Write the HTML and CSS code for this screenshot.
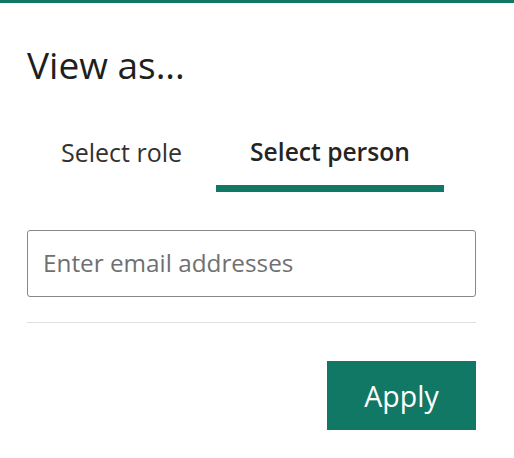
FILE: index.html
```html
<!DOCTYPE html>
<html>
<head>
<meta charset="utf-8">
<link rel="stylesheet" href="styles.css">
</head>
<body>
<div class="topbar"></div>
<div class="panel">
  <h1 class="title">View as...</h1>
  <div class="tabs">
    <div class="tab">Select role</div>
    <div class="tab active">Select person</div>
  </div>
  <div class="field"><input class="input" type="text" placeholder="Enter email addresses"></div>
  <div class="divider"></div>
  <div class="actions"><button class="apply">Apply</button></div>
</div>
</body>
</html>
```
FILE: styles.css
```css
html, body {
  margin: 0;
  padding: 0;
  background: #ffffff;
  font-family: "Open Sans", "Noto Sans", sans-serif;
}
.topbar {
  height: 3px;
  background: #117865;
}
.panel {
  width: 449px;
  padding-left: 27px;
}
.title {
  margin: 0;
  padding-top: 40px;
  font-size: 37px;
  font-weight: 400;
  line-height: 44px;
  color: #201f1e;
}
.tabs {
  display: flex;
  margin-top: 45px;
}
.tab {
  padding: 0 34px 13px;
  line-height: 40px;
  font-size: 25px;
  color: #323130;
  border-bottom: 7px solid transparent;
}
.tab.active {
  font-size: 24.6px;
  font-weight: 600;
  color: #252423;
  border-bottom-color: #117865;
}
.field {
  margin-top: 38px;
}
.input {
  display: block;
  width: 100%;
  height: 67px;
  box-sizing: border-box;
  border: 1px solid #8a8886;
  border-radius: 3px;
  padding: 0 15px 3px;
  font-family: inherit;
  font-size: 24.3px;
  color: #252423;
  outline: none;
}
.input::placeholder {
  color: #707070;
}
.divider {
  margin-top: 25px;
  height: 1px;
  background: #e1dfdd;
}
.actions {
  display: flex;
  justify-content: flex-end;
  margin-top: 38px;
}
.apply {
  width: 149px;
  height: 69px;
  border: none;
  border-radius: 0;
  background: #117865;
  color: #ffffff;
  font-family: inherit;
  font-size: 28.5px;
  padding: 0;
}
```
